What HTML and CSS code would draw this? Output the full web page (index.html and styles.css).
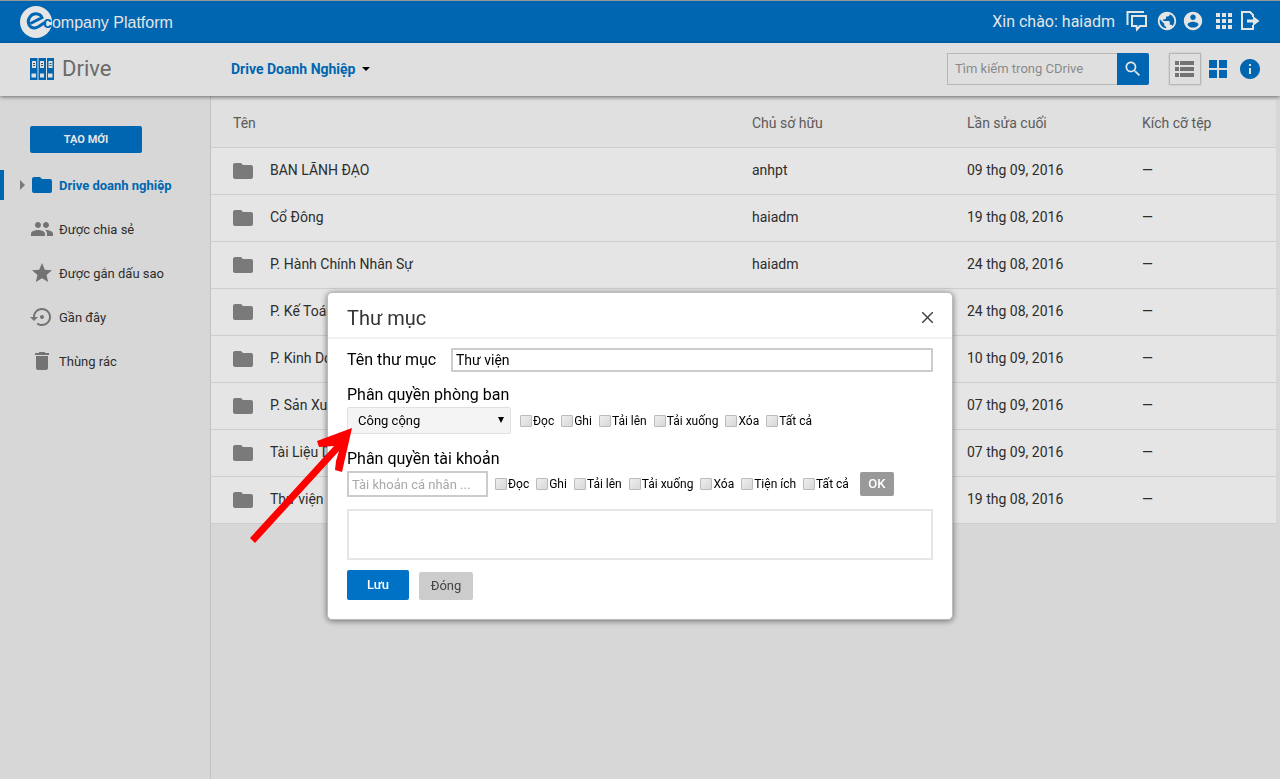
FILE: index.html
```html
<!DOCTYPE html>
<html lang="vi">
<head>
    <meta charset="UTF-8">
    <meta name="viewport" content="width=device-width, initial-scale=1.0">
    <title>Drive</title>
    <link rel="stylesheet" href="styles.css">
</head>
<body>
    <!-- icons -->
    <svg class="defs" width="0" height="0" aria-hidden="true">
        <symbol id="folder" viewBox="0 0 24 24"><path d="M10 4H4Q2 4 2 6V18Q2 20 4 20H20Q22 20 22 18V8Q22 6 20 6H12Z"/></symbol>
    </svg>
    <header class="topbar">
        <a href="#" class="logo">
            <svg width="38" height="34" viewBox="0 0 38 34">
                <circle cx="16" cy="17" r="16" fill="#fff"/>
                <path d="M10.500 18.500L22 12.500C20 8 13 7 9.500 12.500C6.500 17.500 9.500 23.500 15 23C19 22.500 21 19.500 25 17.500" fill="none" stroke="#0072c6" stroke-width="3"/>
            </svg>
            <span class="logo_text"><b>c</b>ompany Platform</span>
        </a>
        <div class="user">
            <span class="hello">Xin chào: haiadm</span>
            <a href="#" class="ic ic_chat" aria-label="Chat"><svg width="22" height="22" viewBox="0 0 22 22"><path d="M1.500 15V2H18M6 6h14v10h-6l-3 3.500L10.500 16H6z" fill="none" stroke="#fff" stroke-width="2"/></svg></a>
            <a href="#" class="ic ic_globe" aria-label="Globe"><svg width="22" height="22" viewBox="0 0 24 24"><path d="M12 2C6.480 2 2 6.480 2 12s4.480 10 10 10 10-4.480 10-10S17.520 2 12 2zm-1 17.930c-3.950-.49-7-3.850-7-7.930 0-.62.08-1.210.21-1.790L9 15v1c0 1.100.9 2 2 2v1.930zm6.900-2.540c-.26-.81-1-1.390-1.900-1.390h-1v-3c0-.55-.45-1-1-1H8v-2h2c.55 0 1-.45 1-1V7h2c1.100 0 2-.9 2-2v-.41c2.930 1.190 5 4.060 5 7.410 0 2.080-.8 3.970-2.100 5.390z"/></svg></a>
            <a href="#" class="ic ic_user" aria-label="Account"><svg width="22" height="22" viewBox="0 0 24 24"><path d="M12 2C6.480 2 2 6.480 2 12s4.480 10 10 10 10-4.480 10-10S17.520 2 12 2zm0 3c1.660 0 3 1.340 3 3s-1.340 3-3 3-3-1.340-3-3 1.340-3 3-3zm0 14.200c-2.500 0-4.710-1.280-6-3.220.03-1.990 4-3.080 6-3.080 1.990 0 5.970 1.090 6 3.080-1.290 1.940-3.500 3.220-6 3.220z"/></svg></a>
            <a href="#" class="ic ic_apps" aria-label="Apps"><svg width="24" height="24" viewBox="0 0 24 24"><path d="M4 8h4V4H4v4zm6 12h4v-4h-4v4zm-6 0h4v-4H4v4zm0-6h4v-4H4v4zm6 0h4v-4h-4v4zm6-10v4h4V4h-4zm-6 4h4V4h-4v4zm6 6h4v-4h-4v4zm0 6h4v-4h-4v4z"/></svg></a>
            <a href="#" class="ic ic_exit" aria-label="Logout"><svg width="20" height="20" viewBox="0 0 20 20"><path d="M13 6V4L10 1H2v17h11v-4" fill="none" stroke="#fff" stroke-width="2"/><path d="M7 8.500h6V5l6.500 5-6.500 5v-3.500H7z"/></svg></a>
        </div>
    </header>

    <div class="toolbar">
        <a href="#" class="brand">
            <svg width="24" height="22" viewBox="0 0 24 22">
                <path fill="#0072c6" d="M0 0h7.500v22H0zM8.500 0H16v22H8.500zM17 0h7v22h-7z"/>
                <path fill="#f9f9f9" d="M2 3h4v7H2zM10 3h4v7h-4zM18.500 3h4v7h-4zM1.500 15.500H6v4H1.500zM10 15.500h4v4h-4zM18 15.500h4.500v4H18z"/>
                <path stroke="#555" d="M3 5.500h2M3 7.500h2M11 5.500h2M11 7.500h2M19.500 5.500h2M19.500 7.500h2"/>
            </svg>
            <span>Drive</span>
        </a>
        <button type="button" class="crumb">Drive Doanh Nghiệp<i class="caret"></i></button>
        <form class="search">
            <input type="text" placeholder="Tìm kiếm trong CDrive" aria-label="Tìm kiếm">
            <button type="button" aria-label="Tìm"><svg width="20" height="20" viewBox="0 0 24 24"><path d="M15.500 14h-.79l-.28-.27C15.410 12.590 16 11.110 16 9.500 16 5.910 13.090 3 9.500 3S3 5.910 3 9.500 5.910 16 9.500 16c1.610 0 3.090-.59 4.230-1.570l.27.28v.79l5 4.990L20.490 19l-4.990-5zm-6 0C7.010 14 5 11.990 5 9.500S7.010 5 9.500 5 14 7.010 14 9.500 11.990 14 9.500 14z"/></svg></button>
        </form>
        <div class="views">
            <button type="button" class="on" aria-label="List"><svg width="20" height="16" viewBox="0 0 20 16"><path d="M0 0h4v4H0zM5 0h14v4H5zM0 6h4v4H0zM5 6h14v4H5zM0 12h4v4H0zM5 12h14v4H5z"/></svg></button>
            <button type="button" aria-label="Grid"><svg width="18" height="18" viewBox="0 0 18 18"><path d="M0 0h8v8H0zM10 0h8v8h-8zM0 10h8v8H0zM10 10h8v8h-8z"/></svg></button>
            <button type="button" aria-label="Info"><svg width="20" height="20" viewBox="2 2 20 20"><path d="M12 2C6.480 2 2 6.480 2 12s4.480 10 10 10 10-4.480 10-10S17.520 2 12 2zm1 15h-2v-6h2v6zm0-8h-2V7h2v2z"/></svg></button>
        </div>
    </div>

    <div class="main">
        <nav class="side">
            <button type="button" class="create">TẠO MỚI</button>
            <a href="#" class="item on"><i class="tri"></i><svg width="24" height="24"><use href="#folder"/></svg><span>Drive doanh nghiệp</span></a>
            <a href="#" class="item"><svg width="24" height="24" viewBox="0 0 24 24"><path d="M16 11c1.660 0 2.990-1.340 2.990-3S17.660 5 16 5c-1.660 0-3 1.340-3 3s1.340 3 3 3zm-8 0c1.660 0 2.990-1.340 2.990-3S9.660 5 8 5C6.340 5 5 6.340 5 8s1.340 3 3 3zm0 2c-2.330 0-7 1.170-7 3.500V19h14v-2.500c0-2.330-4.670-3.500-7-3.500zm8 0c-.29 0-.62.02-.97.05 1.160.84 1.970 1.970 1.970 3.450V19h6v-2.500c0-2.330-4.670-3.500-7-3.500z"/></svg><span>Được chia sẻ</span></a>
            <a href="#" class="item"><svg width="24" height="24" viewBox="0 0 24 24"><path d="M12 17.270L18.180 21l-1.640-7.030L22 9.240l-7.190-.61L12 2 9.190 8.630 2 9.240l5.460 4.730L5.820 21z"/></svg><span>Được gắn dấu sao</span></a>
            <a href="#" class="item"><svg width="24" height="24" viewBox="0 0 24 24"><path d="M14 12c0-1.100-.9-2-2-2s-2 .9-2 2 .9 2 2 2 2-.9 2-2zm-2-9c-4.970 0-9 4.030-9 9H0l4 4 4-4H5c0-3.870 3.130-7 7-7s7 3.130 7 7-3.130 7-7 7c-1.510 0-2.910-.49-4.060-1.300l-1.420 1.440C8.040 20.300 9.940 21 12 21c4.970 0 9-4.030 9-9s-4.030-9-9-9z"/></svg><span>Gần đây</span></a>
            <a href="#" class="item"><svg width="24" height="24" viewBox="0 0 24 24"><path d="M6 19c0 1.100.9 2 2 2h8c1.100 0 2-.9 2-2V7H6v12zM19 4h-3.500l-1-1h-5l-1 1H5v2h14V4z"/></svg><span>Thùng rác</span></a>
        </nav>
        <div class="content">
            <table class="files">
                <colgroup><col><col class="c_owner"><col class="c_date"><col class="c_size"></colgroup>
                <thead>
                    <tr><th>Tên</th><th>Chủ sở hữu</th><th>Lần sửa cuối</th><th>Kích cỡ tệp</th></tr>
                </thead>
                <tbody>
                    <tr><td><svg width="24" height="24"><use href="#folder"/></svg>BAN LÃNH ĐẠO</td><td>anhpt</td><td>09 thg 09, 2016</td><td>—</td></tr>
                    <tr><td><svg width="24" height="24"><use href="#folder"/></svg>Cổ Đông</td><td>haiadm</td><td>19 thg 08, 2016</td><td>—</td></tr>
                    <tr><td><svg width="24" height="24"><use href="#folder"/></svg>P. Hành Chính Nhân Sự</td><td>haiadm</td><td>24 thg 08, 2016</td><td>—</td></tr>
                    <tr><td><svg width="24" height="24"><use href="#folder"/></svg>P. Kế Toán</td><td>haiadm</td><td>24 thg 08, 2016</td><td>—</td></tr>
                    <tr><td><svg width="24" height="24"><use href="#folder"/></svg>P. Kinh Doanh</td><td>haiadm</td><td>10 thg 09, 2016</td><td>—</td></tr>
                    <tr><td><svg width="24" height="24"><use href="#folder"/></svg>P. Sản Xuất</td><td>haiadm</td><td>07 thg 09, 2016</td><td>—</td></tr>
                    <tr><td><svg width="24" height="24"><use href="#folder"/></svg>Tài Liệu Dự Án</td><td>haiadm</td><td>07 thg 09, 2016</td><td>—</td></tr>
                    <tr><td><svg width="24" height="24"><use href="#folder"/></svg>Thư viện</td><td>haiadm</td><td>19 thg 08, 2016</td><td>—</td></tr>
                </tbody>
            </table>
        </div>
    </div>

    <div class="overlay">
        <div class="modal" role="dialog" aria-labelledby="title">
            <div class="modal_head">
                <h2 id="title">Thư mục</h2>
                <button type="button" class="close" aria-label="Close"><svg width="11" height="11" viewBox="0 0 11 11"><path d="M0 0l11 11M11 0L0 11" stroke="#444" stroke-width="1.500"/></svg></button>
            </div>
            <form class="modal_body">
                <div class="name_row">
                    <label for="name">Tên thư mục</label>
                    <input type="text" id="name" value="Thư viện">
                </div>
                <label class="caption" for="dept">Phân quyền phòng ban</label>
                <div class="perm dept">
                    <div class="select">
                        <select id="dept"><option>Công cộng</option></select>
                    </div>
                    <div class="checks">
                        <label><input type="checkbox">Đọc</label>
                        <label><input type="checkbox">Ghi</label>
                        <label><input type="checkbox">Tải lên</label>
                        <label><input type="checkbox">Tải xuống</label>
                        <label><input type="checkbox">Xóa</label>
                        <label><input type="checkbox">Tất cả</label>
                    </div>
                </div>
                <label class="caption" for="account">Phân quyền tài khoản</label>
                <div class="perm account">
                    <input type="text" id="account" placeholder="Tài khoản cá nhân ...">
                    <div class="checks">
                        <label><input type="checkbox">Đọc</label>
                        <label><input type="checkbox">Ghi</label>
                        <label><input type="checkbox">Tải lên</label>
                        <label><input type="checkbox">Tải xuống</label>
                        <label><input type="checkbox">Xóa</label>
                        <label><input type="checkbox">Tiện ích</label>
                        <label><input type="checkbox">Tất cả</label>
                    </div>
                    <button type="button" class="ok">OK</button>
                </div>
                <div class="box"></div>
                <div class="actions">
                    <button type="button" class="save">Lưu</button>
                    <button type="button" class="cancel">Đóng</button>
                </div>
            </form>
            <!-- red pointer to the select -->
            <svg class="pointer" width="104" height="116" viewBox="0 0 104 116"><path d="M102 1L67 14l2 6 15-1L0 111l5 5L89 24 86 34l-1 9 7 2z" fill="#f00"/></svg>
        </div>
    </div>
</body>
</html>
```
FILE: styles.css
```css
* {
    box-sizing: border-box;
    padding: 0;
    margin: 0;
}
body {
    min-height: 100vh;
    display: flex;
    flex-direction: column;
    background: #f0f0f0;
    color: #333;
    font: 14px/20px Roboto, "Open Sans", sans-serif;
}
a {
    text-decoration: none;
}
button, input, select {
    font: inherit;
    border: 0;
}
svg {
    display: block;
    flex: none;
}
.defs {
    position: absolute;
}

/* top bar */
.topbar {
    height: 43px;
    padding: 0 20px;
    display: flex;
    align-items: center;
    justify-content: space-between;
    background: #0072c6;
    border-top: 1px solid #aaa;
    color: #fff;
}
.logo {
    display: flex;
    align-items: center;
    color: #fff;
}
.logo_text {
    margin-left: -15px;
    padding-top: 1px;
    font: 16px/20px "Liberation Sans", sans-serif;
}
.logo_text b {
    color: #0072c6;
}
.user {
    display: flex;
    align-items: center;
    fill: #fff;
}
.hello {
    margin-right: 11px;
    font-size: 16px;
}
.ic {
    padding-bottom: 2px;
}
.ic_globe {
    margin-left: 8px;
}
.ic_user {
    margin-left: 4px;
}
.ic_apps {
    margin-left: 8px;
}
.ic_exit {
    margin-left: 4px;
}

/* toolbar */
.toolbar {
    position: relative;
    z-index: 1;
    height: 53px;
    padding: 0 14px 2px 30px;
    display: flex;
    align-items: center;
    background: #f9f9f9;
    box-shadow: 0 1px 4px rgba(0,0,0,0.5);
}
.brand {
    width: 201px;
    display: flex;
    align-items: center;
    gap: 8px;
    color: #777;
    font-size: 22px;
}
.crumb {
    display: flex;
    align-items: center;
    background: none;
    color: #0072c6;
    font-size: 14px;
    font-weight: bold;
}
.caret {
    margin-left: 6px;
    border: 4px solid transparent;
    border-top-color: #000;
    border-bottom: 0;
}
.search {
    margin-left: auto;
    display: flex;
}
.search input {
    width: 170px;
    height: 32px;
    padding: 0 7px;
    border: 1px solid #ccc;
    border-right: 0;
    background: none;
    font-size: 13px;
}
.search input::placeholder {
    color: #999;
}
.search button {
    width: 32px;
    height: 32px;
    display: flex;
    align-items: center;
    justify-content: center;
    background: #0072c6;
    border-radius: 0 2px 2px 0;
    fill: #fff;
}
.views {
    margin-left: 20px;
    display: flex;
    align-items: center;
}
.views button {
    height: 32px;
    width: 32px;
    display: flex;
    align-items: center;
    justify-content: center;
    background: none;
    fill: #0072c6;
}
.views button.on {
    margin-right: 1px;
    border: 1px solid #ccc;
    box-shadow: 0 0 2px #ccc;
    fill: #808080;
}

/* sidebar */
.main {
    flex: 1;
    display: flex;
}
.side {
    width: 211px;
    padding-top: 30px;
    border-right: 1px solid #d8d8d8;
}
.create {
    width: 112px;
    height: 27px;
    margin: 0 0 17px 30px;
    background: #0072c6;
    border-radius: 2px;
    color: #fff;
    font-size: 11px;
    font-weight: bold;
}
.item {
    position: relative;
    height: 30px;
    margin-bottom: 14px;
    padding-left: 30px;
    display: flex;
    align-items: center;
    gap: 5px;
    color: #333;
    font-size: 13px;
    fill: #808080;
}
.item span {
    padding-top: 2px;
}
.item.on {
    padding-left: 26px;
    border-left: 4px solid #0072c6;
    color: #0072c6;
    font-weight: bold;
    fill: #0072c6;
}
.tri {
    position: absolute;
    left: 16px;
    border: 5px solid transparent;
    border-left-color: #888;
    border-right: 0;
}

/* file list */
.content {
    flex: 1;
    padding: 4px 4px 0 0;
}
.files {
    width: 100%;
    table-layout: fixed;
    border-collapse: collapse;
    background: #fff;
}
.c_owner {
    width: 215px;
}
.c_date {
    width: 175px;
}
.c_size {
    width: 144px;
}
.files th, .files td {
    height: 47px;
    padding-left: 10px;
    border-bottom: 1px solid #e6e6e6;
    text-align: left;
    font-weight: normal;
}
.files td {
    padding-bottom: 2px;
}
.files th {
    background: #fafafa;
    color: #666;
}
.files th:first-child {
    padding-left: 22px;
}
.files td:first-child {
    padding-left: 59px;
    position: relative;
}
.files td svg {
    position: absolute;
    left: 20px;
    top: 11px;
    fill: #888;
}

/* folder dialog */
.overlay {
    position: fixed;
    z-index: 2;
    top: 0;
    right: 0;
    bottom: 0;
    left: 0;
    padding-top: 292px;
    display: flex;
    justify-content: center;
    align-items: flex-start;
    background: rgba(0,0,0,0.1);
}
.modal {
    position: relative;
    width: 626px;
    background: #fff;
    border: 1px solid #bbb;
    border-radius: 5px;
    box-shadow: 0 1px 6px rgba(0,0,0,0.5);
    color: #000;
}
.modal_head {
    height: 46px;
    padding: 0 19px;
    display: flex;
    align-items: center;
    justify-content: space-between;
    border-bottom: 2px solid #f0f0f0;
}
.modal_head h2 {
    padding-top: 6px;
    color: #333;
    font-size: 20px;
    font-weight: normal;
}
.close {
    padding-top: 5px;
    background: none;
}
.modal_body {
    padding: 9px 19px 19px;
}
.name_row {
    display: flex;
    align-items: center;
    font-size: 15px;
}
.name_row label {
    width: 104px;
}
.name_row input {
    flex: 1;
    height: 24px;
    padding: 0 3px;
    border: 2px solid #ccc;
    font-size: 14px;
}
.name_row label, .caption {
    font-size: 16px;
}
.caption {
    display: block;
    margin-top: 13px;
}
.perm {
    display: flex;
    align-items: center;
}
.dept {
    height: 31px;
}
.select {
    position: relative;
}
.select select {
    width: 164px;
    height: 27px;
    padding-left: 10px;
    appearance: none;
    background: #f4f4f4;
    border: 1px solid #e0e0e0;
    border-radius: 2px;
    font-size: 13px;
}
.select::after {
    content: "";
    position: absolute;
    right: 7px;
    top: 10px;
    border: 3px solid transparent;
    border-top: 6px solid #000;
    border-bottom: 0;
}
.checks {
    margin-left: 9px;
    display: flex;
    gap: 7px;
    font-size: 12px;
}
.checks label {
    display: flex;
    align-items: center;
}
.checks input {
    width: 12px;
    height: 12px;
    margin-right: 1px;
    appearance: none;
    background: linear-gradient(135deg, #eee, #d8d8d8);
    border: 1px solid #bbb;
    border-radius: 1px;
}
.account {
    height: 26px;
    margin-top: 2px;
}
.account .checks {
    margin-left: 7px;
}
.account > input {
    width: 141px;
    height: 26px;
    padding: 0 3px;
    border: 2px solid #ccc;
    font-size: 13px;
}
.account > input::placeholder {
    color: #a9a9a9;
}
.ok {
    width: 34px;
    height: 24px;
    margin-left: 11px;
    background: #999;
    border-radius: 2px;
    color: #fff;
    font-size: 13px;
    font-weight: 500;
}
.box {
    height: 51px;
    margin: 12px 0 10px;
    border: 2px solid #e6e6e6;
}
.actions {
    display: flex;
    align-items: flex-end;
    gap: 10px;
}
.actions button {
    border-radius: 2px;
    font-size: 13px;
}
.save {
    width: 62px;
    height: 30px;
    background: #0072c6;
    color: #fff;
    font-weight: 500;
}
.cancel {
    width: 54px;
    height: 28px;
    background: #ccc;
    color: #444;
}
.pointer {
    position: absolute;
    left: -78px;
    top: 134px;
}
```
